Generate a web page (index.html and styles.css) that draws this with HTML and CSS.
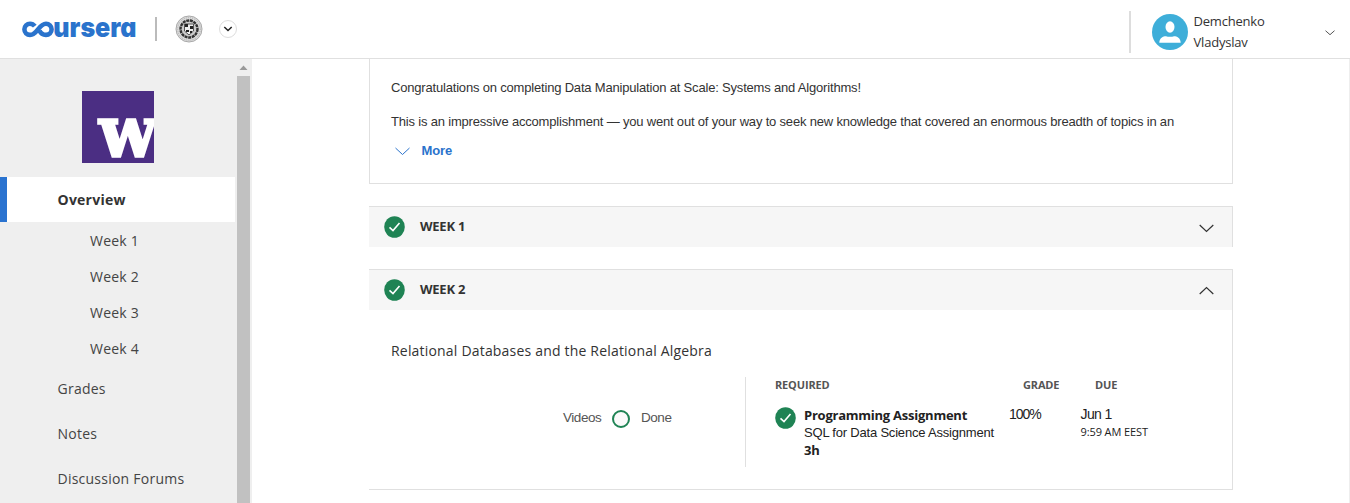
FILE: index.html
```
<!DOCTYPE html>
<html lang="en">
<head>
<meta charset="utf-8">
<title>Coursera</title>
<link rel="stylesheet" href="styles.css">
</head>
<body>
<header class="topbar">
  <svg class="logo" width="118" height="24" viewBox="0 0 118 24">
    <path d="M13.800 8.200C12.400 6.300 10.800 5.700 9 5.700A5.600 5.600 0 0 0 9 16.900C16.500 16.900 17.500 5.700 25 5.700A5.600 5.600 0 0 1 25 16.900C22 16.900 19.700 15.500 18.500 12.700" fill="none" stroke="#2a73cc" stroke-width="4.600"/>
    <text x="32.300" y="19" textLength="83.200" lengthAdjust="spacingAndGlyphs" class="logo-text">ursera</text>
  </svg>
  <span class="rule"></span>
  <svg class="seal" width="28" height="28" viewBox="0 0 28 28">
    <circle cx="14" cy="14" r="13" fill="#ddd" stroke="#aaa"/>
    <circle cx="14" cy="14" r="11.300" fill="none" stroke="#aaa" stroke-dasharray="1 1"/>
    <circle cx="14" cy="14" r="8.500" fill="#ccc" stroke="#333" stroke-width="2.400" stroke-dasharray="3 .7"/>
    <path d="M9.500 9h9v7l-4.500 4-4.500-4z" fill="#eee" stroke="#555"/>
    <path d="M10 9h3v3h-3zM15 11h3v3h-3zM11 15h3v2h-3zM15 16h2v2h-2z" fill="#222"/>
  </svg>
  <span class="switch"><svg width="10" height="6" viewBox="0 0 10 6"><path d="M1.300 1 5 4.500 8.700 1" fill="none" stroke="#222" stroke-width="1.500"/></svg></span>
  <div class="account">
    <svg width="36" height="36" viewBox="0 0 36 36"><circle cx="18" cy="18" r="18" fill="#3eaed9"/><ellipse cx="18" cy="13" rx="4.500" ry="5.700" fill="#fff"/><path d="M7.300 28.700C7.500 24 11 22.300 14 22.300c2 .7 6 .7 8 0 3 0 6.500 1.700 6.700 6.400z" fill="#fff"/></svg>
    <div class="name"><div class="n1">Demchenko</div><div class="n2">Vladyslav</div></div>
    <svg class="caret" width="10" height="6" viewBox="0 0 10 6"><path d="M.5.7 5 4.700 9.500.7" fill="none" stroke="#555"/></svg>
  </div>
</header>
<div class="page">
  <aside class="sidebar">
    <nav class="nav">
      <svg class="school" width="72" height="72" viewBox="0 0 72 72"><rect width="72" height="72" fill="#4b2e83"/><text x="17.500" y="65" class="school-text" textLength="57" lengthAdjust="spacingAndGlyphs">W</text></svg>
      <div class="item active"><span class="t-over">Overview</span></div>
      <div class="weeks"><div>Week 1</div><div>Week 2</div><div>Week 3</div><div>Week 4</div></div>
      <div class="item"><span>Grades</span></div>
      <div class="item"><span>Notes</span></div>
      <div class="item"><span>Discussion Forums</span></div>
    </nav>
    <div class="scroll"><svg width="13" height="17" viewBox="0 0 13 17"><path d="M2.500 11 6.500 6.500 10.500 11z" fill="#999"/></svg><div class="thumb"></div></div>
  </aside>
  <main class="main">
    <section class="intro">
      <p class="p1"><span>Congratulations on completing Data Manipulation at Scale: Systems and Algorithms!</span></p>
      <p class="p2"><span>This is an impressive accomplishment — you went out of your way to seek new knowledge that covered an enormous breadth of topics in an</span></p>
      <div class="more"><svg width="15" height="9" viewBox="0 0 15 9"><path d="M.5 1 7.500 7.500 14.500 1" fill="none" stroke="#2a73cc"/></svg><span>More</span></div>
    </section>
    <section class="week">
      <div class="head"><svg class="check" width="21" height="22" viewBox="0 0 21 22"><ellipse cx="10.500" cy="11" rx="10.300" ry="10.800" fill="#1f8354"/><path d="M5.500 11.300 9 14.500 15.500 7" fill="none" stroke="#fff" stroke-width="1.600"/></svg><b>WEEK 1</b><svg class="arrow down" width="15" height="9" viewBox="0 0 15 9"><path d="M.7 1 7.500 7.500 14.300 1" fill="none" stroke="#333" stroke-width="1.200"/></svg></div>
    </section>
    <section class="week open">
      <div class="head"><svg class="check" width="21" height="22" viewBox="0 0 21 22"><ellipse cx="10.500" cy="11" rx="10.300" ry="10.800" fill="#1f8354"/><path d="M5.500 11.300 9 14.500 15.500 7" fill="none" stroke="#fff" stroke-width="1.600"/></svg><b>WEEK 2</b><svg class="arrow" width="15" height="9" viewBox="0 0 15 9"><path d="M.7 8 7.500 1.500 14.300 8" fill="none" stroke="#333" stroke-width="1.200"/></svg></div>
      <h2 class="topic"><span>Relational Databases and the Relational Algebra</span></h2>
      <div class="detail">
        <div class="videos"><span class="vid">Videos</span><svg width="18" height="18" viewBox="0 0 18 18"><circle cx="9" cy="9" r="8" fill="#fafafa" stroke="#1f8354" stroke-width="2"/></svg><span class="done">Done</span></div>
        <div class="required">
          <div class="label">REQUIRED</div>
          <div class="task">
            <svg class="check" width="21" height="22" viewBox="0 0 21 22"><ellipse cx="10.500" cy="11" rx="10.300" ry="10.800" fill="#1f8354"/><path d="M5.500 11.300 9 14.500 15.500 7" fill="none" stroke="#fff" stroke-width="1.600"/></svg>
            <div class="task-text"><div class="bold"><span>Programming Assignment</span></div><div class="sql"><span>SQL for Data Science Assignment</span></div><div class="bold">3h</div></div>
          </div>
        </div>
        <div class="grade"><div class="label">GRADE</div><div class="value">100%</div></div>
        <div class="due"><div class="label">DUE</div><div class="value">Jun 1</div><div class="time">9:59 AM EEST</div></div>
      </div>
    </section>
  </main>
</div>
</body>
</html>
```
FILE: styles.css
```
* { box-sizing: border-box; }
body { margin: 0; width: 1350px; height: 503px; overflow: hidden; background: #fff; color: #333; font-family: "Liberation Sans", Arial, sans-serif; font-size: 14px; }
svg { display: block; flex: none; }
span, b, .label, .value, .time, .weeks div, .name div { white-space: nowrap; }
.topbar { display: flex; height: 59px; border-bottom: 1px solid #e0e0e0; }
.logo { margin: 18px 0 0 21px; overflow: visible; }
.logo-text { font: 900 27px Inter, sans-serif; font-feature-settings: "cv11" 1; fill: #2a73cc; }
.rule { width: 2px; height: 24px; margin: 17px 0 0 16px; background: #bbb; }
.seal { margin: 15px 0 0 18px; }
.switch { display: flex; align-items: center; justify-content: center; width: 18px; height: 18px; margin: 20px 0 0 16px; border: 1px solid #ddd; border-radius: 50%; }
.account { display: flex; width: 221px; height: 42px; margin: 11px 0 0 auto; border-left: 2px solid #ddd; padding: 3px 0 0 21px; }
.name { font: 13px/21px "Open Sans", sans-serif; letter-spacing: -.2px; margin: -3px 0 0 5.500px; }
.caret { margin: 16px 15px 0 auto; }
.page { display: flex; height: 444px; border-right: 1px solid #eee; }
.sidebar { display: flex; width: 252px; background: #efefef; font: 14px/20px "Open Sans", sans-serif; letter-spacing: .24px; color: #444; }
.nav { width: 235px; }
.school { margin: 32px 0 14px 82px; }
.school-text { font: bold 48px "DejaVu Serif", serif; fill: #fff; stroke: #fff; stroke-width: 3.500px; }
.item { height: 45px; padding: 13px 0 0 57.500px; }
.active { background: #fff; border-left: 7px solid #2a73d0; padding-left: 50.500px; font-weight: bold; color: #333; }
.weeks { padding: 1px 0 0 90px; margin-bottom: -1px; line-height: 36px; }
.scroll { width: 13px; margin-left: 2px; }
.thumb { height: 427px; background: #c1c1c1; }
.main { width: 864px; margin-left: 117px; }
.intro { height: 125px; padding: 20px 0 0 21px; border: 1px solid #e0e0e0; border-top: 0; }
.intro p { margin: 0; height: 34px; line-height: 18px; font-size: 13px; letter-spacing: -.186px; }
.more { display: flex; align-items: center; height: 18px; margin-top: -6px; padding-left: 4px; color: #2a73cc; font-weight: bold; font-size: 13px; letter-spacing: -.1px; }
.more svg { margin-top: 3px; }
.more span { margin-left: 11.500px; }
.week { margin-top: 22px; border-top: 1px solid #e0e0e0; border-right: 1px solid #e0e0e0; }
.head { display: flex; align-items: center; height: 40px; padding: 0 18px 0 15px; background: #f6f6f6; font: 13px "Open Sans", sans-serif; }
.head b { margin: -2px 0 0 15px; letter-spacing: -.25px; }
.arrow { margin-left: auto; }
.down { margin-top: 2px; }
.open { height: 221px; border-bottom: 1px solid #e0e0e0; }
.topic { margin: 31px 0 0 22px; height: 20px; font: 14px/20px "Open Sans", sans-serif; letter-spacing: .19px; }
.detail { display: flex; height: 90px; margin-top: 16px; }
.videos { display: flex; width: 377px; padding: 32px 0 0 194px; border-right: 1px solid #e0e0e0; line-height: 18px; font-size: 13.500px; letter-spacing: -.45px; color: #555; }
.vid { width: 38px; }
.videos svg { margin: 1px 11px 0 11px; }
.required { width: 248px; padding-left: 29px; }
.label { height: 16px; font: bold 11px/16px "Open Sans", sans-serif; letter-spacing: -.15px; color: #555; }
.task { display: flex; margin-top: 14px; color: #222; }
.task-text { margin: -1px 0 0 8px; line-height: 18px; }
.bold { font: bold 13px/18px "Open Sans", sans-serif; letter-spacing: -.24px; height: 18px; }
.sql { font-size: 13px; height: 17px; letter-spacing: -.2px; }
.grade { width: 72px; padding-left: 29px; }
.value { margin: 12px 0 0 -14px; line-height: 18px; letter-spacing: -.6px; color: #222; }
.grade .value { letter-spacing: -1px; }
.due { padding-left: 29px; }
.due .value { margin-left: -14.500px; }
.time { margin-left: -14.500px; font: 11px/18px "Open Sans", sans-serif; letter-spacing: -.1px; color: #222; }
```
